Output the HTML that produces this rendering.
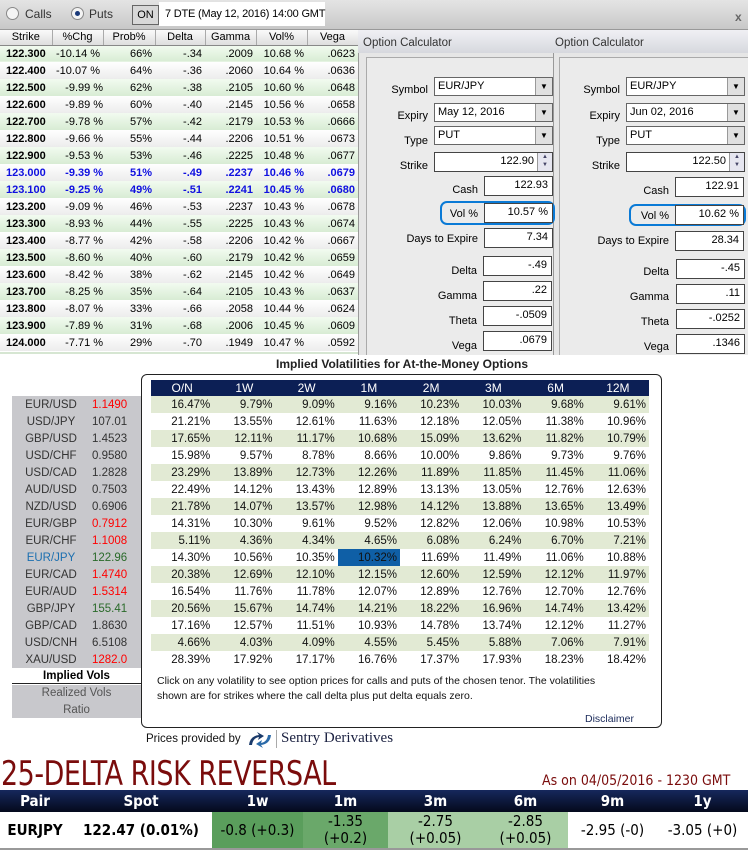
<!DOCTYPE html>
<html><head><meta charset="utf-8"><style>
*{margin:0;padding:0;box-sizing:border-box}
body{width:748px;height:851px;background:#fff;position:relative;overflow:hidden;font-family:"Liberation Sans",Arial,sans-serif;font-size:11px;color:#000}
.a{position:absolute}
.topbar{left:0;top:0;width:748px;height:30px;background:linear-gradient(#e4e4e4,#c8c8c8);border-bottom:1px solid #999}
table{border-collapse:collapse}
#opt{position:absolute;left:0;top:30px;width:358px;table-layout:fixed}
#opt td,#opt th{height:17px;font-size:11px;padding:0 3px;white-space:nowrap;overflow:hidden}
#opt th{height:15px;font-weight:normal;background:linear-gradient(#fafafa,#dedede);border-right:1px solid #aaa;border-bottom:1px solid #888;text-align:center}
#opt td{text-align:right}
#opt td:first-child{font-weight:bold;text-align:left;padding-left:6px}
#opt td:nth-child(2){text-align:left;padding-left:4px}
#opt tr.g td{background:linear-gradient(#f2fbf0,#d8ecd4)}
#opt tr.w td{background:linear-gradient(#ffffff,#ececec)}
#opt tr.b td{color:#1010e0;font-weight:bold}
.lbl{position:absolute;text-align:right;font-size:11px}
.box{position:absolute;background:#fff;border:1px solid #444;text-align:right;padding-right:4px;font-size:11px;line-height:17px}
.cmb{position:absolute;background:#fff;border:1px solid #666;font-size:11px;line-height:16px;padding-left:3px}
.cmb:after{content:"▼";position:absolute;right:0;top:0;width:16px;height:100%;background:#e0e0e0;border-left:1px solid #999;font-size:8px;text-align:center;line-height:17px}
.spin:after{content:"▲\A▼";white-space:pre;position:absolute;right:0;top:0;width:14px;height:100%;background:#e6e6f0;border-left:1px solid #999;font-size:6px;text-align:center;line-height:8px;color:#446}
.volring{position:absolute;border:2px solid #0a7ad6;border-radius:7px}
#vt{position:absolute;left:151px;top:380px;width:498px}
#vt td{width:62.25px;height:17px;text-align:right;padding-right:3px;font-size:11.5px;color:#111}
#vt tr:first-child td{background:#0c1f55;color:#fff;text-align:center;padding:0;height:16px;font-size:12px}
#vt tr.g td{background:#e2ead4}
#pl{position:absolute;left:12px;top:396px;width:129px;background:#c8c8cc}
#pl td{height:17px;font-size:11.5px;color:#333}
#pl td:first-child{width:78px;text-align:center}
#pl td:last-child{text-align:left;padding-left:2px}
.r{color:#f00!important}.gn{color:#2a6a2a!important}.bl{color:#1b6fb0!important}
#rr{position:absolute;left:0;top:790px;width:748px;table-layout:fixed}
#rr th{background:linear-gradient(#16285c,#04091c);color:#fff;height:22px;font-size:15px;font-family:"DejaVu Sans Condensed","DejaVu Sans",sans-serif;font-weight:bold}
#rr td{height:37px;text-align:center;font-family:"DejaVu Sans Condensed","DejaVu Sans",sans-serif;font-size:15px;line-height:17px;border-bottom:2px solid #999;white-space:nowrap}
</style></head><body>
<div class="a topbar"></div>
<div class="a" style="left:6px;top:7px;width:13px;height:13px;border-radius:50%;border:1px solid #888;background:#f4f4f4"></div>
<div class="a" style="left:25px;top:7px;font-size:12px;color:#333">Calls</div>
<div class="a" style="left:71px;top:7px;width:13px;height:13px;border-radius:50%;border:1px solid #888;background:#f4f4f4"></div>
<div class="a" style="left:75px;top:11px;width:5px;height:5px;border-radius:50%;background:#1a3a7a"></div>
<div class="a" style="left:89px;top:7px;font-size:12px;color:#333">Puts</div>
<div class="a" style="left:132px;top:5px;width:27px;height:20px;border:1px solid #666;background:#d8d8d8;font-size:11px;text-align:center;line-height:19px">ON</div>
<div class="a" style="left:159px;top:2px;width:166px;height:24px;background:#fff;font-size:11px;line-height:24px;padding-left:6px;white-space:nowrap;letter-spacing:-0.2px">7 DTE (May 12, 2016) 14:00 GMT</div>
<div class="a" style="left:735px;top:10px;font-size:12px;color:#666;font-weight:bold">x</div>

<table id="opt">
<colgroup><col style="width:52px"><col style="width:51px"><col style="width:52px"><col style="width:50px"><col style="width:51px"><col style="width:51px"><col style="width:51px"></colgroup>
<tr><th>Strike</th><th>%Chg</th><th>Prob%</th><th>Delta</th><th>Gamma</th><th>Vol%</th><th>Vega</th></tr>
<tr class="g"><td>122.300</td><td>-10.14 %</td><td>66%</td><td>-.34</td><td>.2009</td><td>10.68 %</td><td>.0623</td></tr>
<tr class="w"><td>122.400</td><td>-10.07 %</td><td>64%</td><td>-.36</td><td>.2060</td><td>10.64 %</td><td>.0636</td></tr>
<tr class="g"><td>122.500</td><td>&nbsp;&nbsp;&nbsp;-9.99 %</td><td>62%</td><td>-.38</td><td>.2105</td><td>10.60 %</td><td>.0648</td></tr>
<tr class="w"><td>122.600</td><td>&nbsp;&nbsp;&nbsp;-9.89 %</td><td>60%</td><td>-.40</td><td>.2145</td><td>10.56 %</td><td>.0658</td></tr>
<tr class="g"><td>122.700</td><td>&nbsp;&nbsp;&nbsp;-9.78 %</td><td>57%</td><td>-.42</td><td>.2179</td><td>10.53 %</td><td>.0666</td></tr>
<tr class="w"><td>122.800</td><td>&nbsp;&nbsp;&nbsp;-9.66 %</td><td>55%</td><td>-.44</td><td>.2206</td><td>10.51 %</td><td>.0673</td></tr>
<tr class="g"><td>122.900</td><td>&nbsp;&nbsp;&nbsp;-9.53 %</td><td>53%</td><td>-.46</td><td>.2225</td><td>10.48 %</td><td>.0677</td></tr>
<tr class="w b"><td>123.000</td><td>&nbsp;&nbsp;&nbsp;-9.39 %</td><td>51%</td><td>-.49</td><td>.2237</td><td>10.46 %</td><td>.0679</td></tr>
<tr class="g b"><td>123.100</td><td>&nbsp;&nbsp;&nbsp;-9.25 %</td><td>49%</td><td>-.51</td><td>.2241</td><td>10.45 %</td><td>.0680</td></tr>
<tr class="w"><td>123.200</td><td>&nbsp;&nbsp;&nbsp;-9.09 %</td><td>46%</td><td>-.53</td><td>.2237</td><td>10.43 %</td><td>.0678</td></tr>
<tr class="g"><td>123.300</td><td>&nbsp;&nbsp;&nbsp;-8.93 %</td><td>44%</td><td>-.55</td><td>.2225</td><td>10.43 %</td><td>.0674</td></tr>
<tr class="w"><td>123.400</td><td>&nbsp;&nbsp;&nbsp;-8.77 %</td><td>42%</td><td>-.58</td><td>.2206</td><td>10.42 %</td><td>.0667</td></tr>
<tr class="g"><td>123.500</td><td>&nbsp;&nbsp;&nbsp;-8.60 %</td><td>40%</td><td>-.60</td><td>.2179</td><td>10.42 %</td><td>.0659</td></tr>
<tr class="w"><td>123.600</td><td>&nbsp;&nbsp;&nbsp;-8.42 %</td><td>38%</td><td>-.62</td><td>.2145</td><td>10.42 %</td><td>.0649</td></tr>
<tr class="g"><td>123.700</td><td>&nbsp;&nbsp;&nbsp;-8.25 %</td><td>35%</td><td>-.64</td><td>.2105</td><td>10.43 %</td><td>.0637</td></tr>
<tr class="w"><td>123.800</td><td>&nbsp;&nbsp;&nbsp;-8.07 %</td><td>33%</td><td>-.66</td><td>.2058</td><td>10.44 %</td><td>.0624</td></tr>
<tr class="g"><td>123.900</td><td>&nbsp;&nbsp;&nbsp;-7.89 %</td><td>31%</td><td>-.68</td><td>.2006</td><td>10.45 %</td><td>.0609</td></tr>
<tr class="w"><td>124.000</td><td>&nbsp;&nbsp;&nbsp;-7.71 %</td><td>29%</td><td>-.70</td><td>.1949</td><td>10.47 %</td><td>.0592</td></tr>
</table>

<!-- option calc -->
<div class="a" style="left:358px;top:30px;width:390px;height:325px;background:#e6e6e6;border-left:1px solid #999"></div>
<div class="a" style="left:358px;top:30px;width:390px;height:23px;background:linear-gradient(#f0f0f4,#d6d8de)"></div>
<div class="a" style="left:363px;top:37px;font-size:11.5px;color:#333">Option Calculator</div>
<div class="a" style="left:555px;top:37px;font-size:11.5px;color:#333">Option Calculator</div>
<div class="a" style="left:553px;top:53px;width:1px;height:302px;background:#999"></div>
<div class="a" style="left:366px;top:57px;width:187px;height:298px;border:1px solid #aaa;border-right:none;border-bottom:none;background:#ebebeb"></div>
<div class="a" style="left:559px;top:57px;width:189px;height:298px;border:1px solid #aaa;border-right:none;border-bottom:none;background:#ebebeb"></div>

<div class="lbl" style="left:370px;width:58px;top:84px">Symbol</div>
<div class="cmb" style="left:434px;top:77px;width:119px;height:19px">EUR/JPY</div>
<div class="lbl" style="left:370px;width:58px;top:110px">Expiry</div>
<div class="cmb" style="left:434px;top:103px;width:119px;height:19px">May 12, 2016</div>
<div class="lbl" style="left:370px;width:58px;top:135px">Type</div>
<div class="cmb" style="left:434px;top:126px;width:119px;height:19px">PUT</div>
<div class="lbl" style="left:370px;width:58px;top:160px">Strike</div>
<div class="box spin" style="left:434px;top:152px;width:119px;height:20px;padding-right:18px">122.90</div>
<div class="lbl" style="left:400px;width:78px;top:184px">Cash</div>
<div class="box" style="left:484px;top:176px;width:69px;height:20px">122.93</div>
<div class="volring" style="left:440px;top:201px;width:115px;height:24px"></div>
<div class="lbl" style="left:400px;width:78px;top:208px">Vol %</div>
<div class="box" style="left:484px;top:203px;width:69px;height:20px">10.57 %</div>
<div class="lbl" style="left:380px;width:98px;top:233px">Days to Expire</div>
<div class="box" style="left:484px;top:228px;width:69px;height:20px">7.34</div>
<div class="lbl" style="left:400px;width:77px;top:265px">Delta</div>
<div class="box" style="left:483px;top:256px;width:69px;height:20px">-.49</div>
<div class="lbl" style="left:400px;width:77px;top:290px">Gamma</div>
<div class="box" style="left:483px;top:281px;width:69px;height:20px">.22</div>
<div class="lbl" style="left:400px;width:77px;top:315px">Theta</div>
<div class="box" style="left:483px;top:306px;width:69px;height:20px">-.0509</div>
<div class="lbl" style="left:400px;width:77px;top:340px">Vega</div>
<div class="box" style="left:483px;top:331px;width:69px;height:20px">.0679</div>

<div class="lbl" style="left:562px;width:58px;top:84px">Symbol</div>
<div class="cmb" style="left:626px;top:77px;width:119px;height:19px">EUR/JPY</div>
<div class="lbl" style="left:562px;width:58px;top:110px">Expiry</div>
<div class="cmb" style="left:626px;top:103px;width:119px;height:19px">Jun 02, 2016</div>
<div class="lbl" style="left:562px;width:58px;top:135px">Type</div>
<div class="cmb" style="left:626px;top:126px;width:119px;height:19px">PUT</div>
<div class="lbl" style="left:562px;width:58px;top:160px">Strike</div>
<div class="box spin" style="left:626px;top:152px;width:119px;height:20px;padding-right:18px">122.50</div>
<div class="lbl" style="left:590px;width:79px;top:185px">Cash</div>
<div class="box" style="left:675px;top:177px;width:69px;height:20px">122.91</div>
<div class="volring" style="left:629px;top:204px;width:117px;height:22px"></div>
<div class="lbl" style="left:590px;width:79px;top:210px">Vol %</div>
<div class="box" style="left:675px;top:205px;width:69px;height:20px">10.62 %</div>
<div class="lbl" style="left:570px;width:99px;top:235px">Days to Expire</div>
<div class="box" style="left:675px;top:231px;width:69px;height:20px">28.34</div>
<div class="lbl" style="left:590px;width:79px;top:266px">Delta</div>
<div class="box" style="left:676px;top:259px;width:69px;height:20px">-.45</div>
<div class="lbl" style="left:590px;width:79px;top:291px">Gamma</div>
<div class="box" style="left:676px;top:284px;width:69px;height:20px">.11</div>
<div class="lbl" style="left:590px;width:79px;top:316px">Theta</div>
<div class="box" style="left:676px;top:309px;width:69px;height:20px">-.0252</div>
<div class="lbl" style="left:590px;width:79px;top:341px">Vega</div>
<div class="box" style="left:676px;top:334px;width:69px;height:20px">.1346</div>
<div class="a" style="left:0;top:352px;width:358px;height:2px;background:#d6e6d2"></div>

<!-- implied vol -->
<div class="a" style="left:276px;top:357px;font-size:12px;font-weight:bold;color:#222">Implied Volatilities for At-the-Money Options</div>
<div class="a" style="left:141px;top:374px;width:521px;height:354px;border:1px solid #222;border-radius:6px"></div>
<table id="vt">
<tr><td>O/N</td><td>1W</td><td>2W</td><td>1M</td><td>2M</td><td>3M</td><td>6M</td><td>12M</td></tr>
<tr class="g"><td>16.47%</td><td>9.79%</td><td>9.09%</td><td>9.16%</td><td>10.23%</td><td>10.03%</td><td>9.68%</td><td>9.61%</td></tr>
<tr><td>21.21%</td><td>13.55%</td><td>12.61%</td><td>11.63%</td><td>12.18%</td><td>12.05%</td><td>11.38%</td><td>10.96%</td></tr>
<tr class="g"><td>17.65%</td><td>12.11%</td><td>11.17%</td><td>10.68%</td><td>15.09%</td><td>13.62%</td><td>11.82%</td><td>10.79%</td></tr>
<tr><td>15.98%</td><td>9.57%</td><td>8.78%</td><td>8.66%</td><td>10.00%</td><td>9.86%</td><td>9.73%</td><td>9.76%</td></tr>
<tr class="g"><td>23.29%</td><td>13.89%</td><td>12.73%</td><td>12.26%</td><td>11.89%</td><td>11.85%</td><td>11.45%</td><td>11.06%</td></tr>
<tr><td>22.49%</td><td>14.12%</td><td>13.43%</td><td>12.89%</td><td>13.13%</td><td>13.05%</td><td>12.76%</td><td>12.63%</td></tr>
<tr class="g"><td>21.78%</td><td>14.07%</td><td>13.57%</td><td>12.98%</td><td>14.12%</td><td>13.88%</td><td>13.65%</td><td>13.49%</td></tr>
<tr><td>14.31%</td><td>10.30%</td><td>9.61%</td><td>9.52%</td><td>12.82%</td><td>12.06%</td><td>10.98%</td><td>10.53%</td></tr>
<tr class="g"><td>5.11%</td><td>4.36%</td><td>4.34%</td><td>4.65%</td><td>6.08%</td><td>6.24%</td><td>6.70%</td><td>7.21%</td></tr>
<tr><td>14.30%</td><td>10.56%</td><td>10.35%</td><td style="background:#0f5fa6;color:#111">10.32%</td><td>11.69%</td><td>11.49%</td><td>11.06%</td><td>10.88%</td></tr>
<tr class="g"><td>20.38%</td><td>12.69%</td><td>12.10%</td><td>12.15%</td><td>12.60%</td><td>12.59%</td><td>12.12%</td><td>11.97%</td></tr>
<tr><td>16.54%</td><td>11.76%</td><td>11.78%</td><td>12.07%</td><td>12.89%</td><td>12.76%</td><td>12.70%</td><td>12.76%</td></tr>
<tr class="g"><td>20.56%</td><td>15.67%</td><td>14.74%</td><td>14.21%</td><td>18.22%</td><td>16.96%</td><td>14.74%</td><td>13.42%</td></tr>
<tr><td>17.16%</td><td>12.57%</td><td>11.51%</td><td>10.93%</td><td>14.78%</td><td>13.74%</td><td>12.12%</td><td>11.27%</td></tr>
<tr class="g"><td>4.66%</td><td>4.03%</td><td>4.09%</td><td>4.55%</td><td>5.45%</td><td>5.88%</td><td>7.06%</td><td>7.91%</td></tr>
<tr><td>28.39%</td><td>17.92%</td><td>17.17%</td><td>16.76%</td><td>17.37%</td><td>17.93%</td><td>18.23%</td><td>18.42%</td></tr>
</table>
<table id="pl">
<tr><td>EUR/USD</td><td class="r">1.1490</td></tr>
<tr><td>USD/JPY</td><td>107.01</td></tr>
<tr><td>GBP/USD</td><td>1.4523</td></tr>
<tr><td>USD/CHF</td><td>0.9580</td></tr>
<tr><td>USD/CAD</td><td>1.2828</td></tr>
<tr><td>AUD/USD</td><td>0.7503</td></tr>
<tr><td>NZD/USD</td><td>0.6906</td></tr>
<tr><td>EUR/GBP</td><td class="r">0.7912</td></tr>
<tr><td>EUR/CHF</td><td class="r">1.1008</td></tr>
<tr><td class="bl">EUR/JPY</td><td class="gn">122.96</td></tr>
<tr><td>EUR/CAD</td><td class="r">1.4740</td></tr>
<tr><td>EUR/AUD</td><td class="r">1.5314</td></tr>
<tr><td>GBP/JPY</td><td class="gn">155.41</td></tr>
<tr><td>GBP/CAD</td><td>1.8630</td></tr>
<tr><td>USD/CNH</td><td>6.5108</td></tr>
<tr><td>XAU/USD</td><td class="r">1282.0</td></tr>
</table>
<div class="a" style="left:12px;top:668px;width:129px;height:16px;text-align:center;font-weight:bold;font-size:11.5px;line-height:16px;border-bottom:1px solid #222">Implied Vols</div>
<div class="a" style="left:12px;top:685px;width:129px;height:33px;background:#c8c8cc;text-align:center;font-size:11.5px;color:#555;line-height:16.5px">Realized Vols<br>Ratio</div>
<div class="a" style="left:157px;top:674px;width:470px;font-size:10.5px;line-height:15px;color:#111">Click on any volatility to see option prices for calls and puts of the chosen tenor. The volatilities shown are for strikes where the call delta plus put delta equals zero.</div>
<div class="a" style="left:585px;top:713px;font-size:10.5px;color:#1a2a5a">Disclaimer</div>
<div class="a" style="left:146px;top:733px;font-size:11.5px;color:#111">Prices provided by</div>
<svg class="a" style="left:247px;top:731px" width="26" height="18" viewBox="0 0 26 18"><path d="M2 14 Q3 5 12 4 L10 1 L17 5 L11 9 L12 6 Q6 7 5 14Z" fill="#1a3a6a"/><path d="M24 4 Q23 13 14 14 L16 17 L9 13 L15 9 L14 12 Q20 11 21 4Z" fill="#2b6aa8"/></svg>
<div class="a" style="left:276px;top:730px;width:1px;height:18px;background:#aaa"></div>
<div class="a" style="left:281px;top:730px;font-family:'Liberation Serif',serif;font-size:15px;color:#1a2040">Sentry Derivatives</div>

<!-- risk reversal -->
<div class="a" style="left:1px;top:756px;font-family:'DejaVu Sans Condensed','DejaVu Sans',sans-serif;font-size:34px;color:#7a0c0c;transform:scaleX(0.88);transform-origin:left;letter-spacing:-0.5px;line-height:36px;white-space:nowrap">25-DELTA RISK REVERSAL</div>
<div class="a" style="left:542px;top:773px;font-family:'DejaVu Sans Condensed','DejaVu Sans',sans-serif;font-size:14px;color:#7a0c0c;white-space:nowrap">As on 04/05/2016 - 1230 GMT</div>
<table id="rr">
<colgroup><col style="width:70px"><col style="width:142px"><col style="width:91px"><col style="width:85px"><col style="width:95px"><col style="width:85px"><col style="width:89px"><col style="width:91px"></colgroup>
<tr><th>Pair</th><th>Spot</th><th>1w</th><th>1m</th><th>3m</th><th>6m</th><th>9m</th><th>1y</th></tr>
<tr><td style="font-weight:bold">EURJPY</td><td style="font-weight:bold">122.47 (0.01%)</td><td style="background:#5a9e5c">-0.8 (+0.3)</td><td style="background:#6aa86a">-1.35<br>(+0.2)</td><td style="background:#a9cfa5">-2.75<br>(+0.05)</td><td style="background:#a9cfa5">-2.85<br>(+0.05)</td><td>-2.95 (-0)</td><td>-3.05 (+0)</td></tr>
</table>
</body></html>
